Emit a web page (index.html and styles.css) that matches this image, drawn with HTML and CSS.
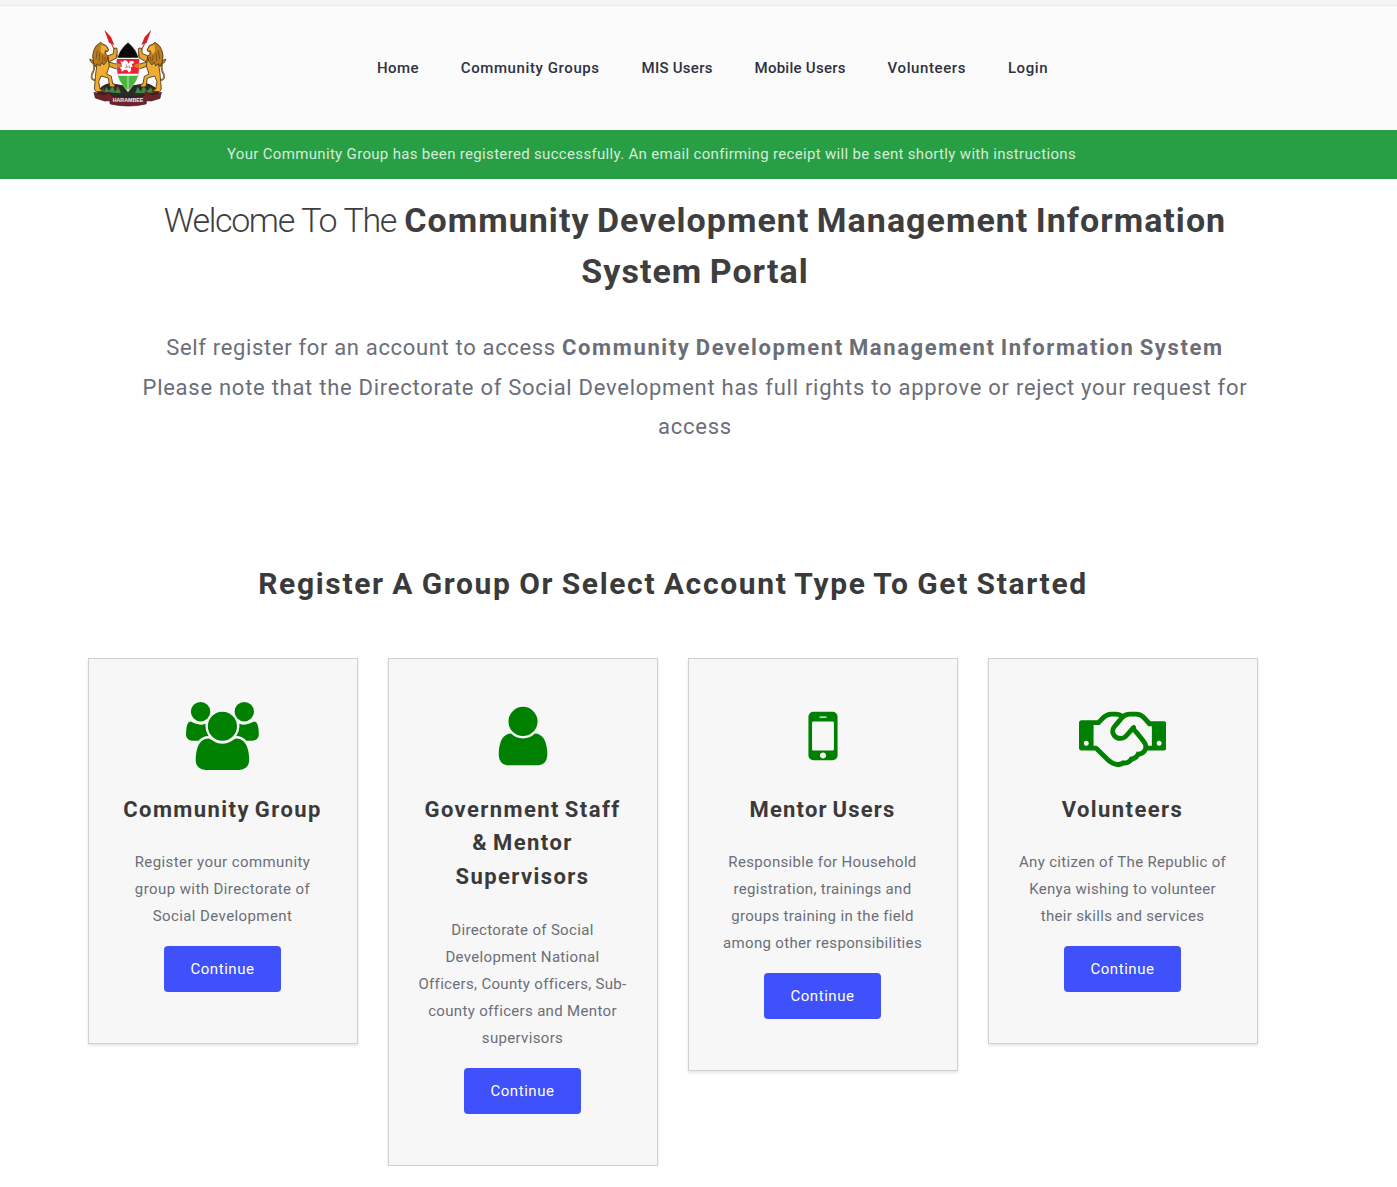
FILE: index.html
```html
<!DOCTYPE html>
<html lang="en">
<head>
<meta charset="utf-8">
<title>Community Development Management Information System</title>
<link rel="stylesheet" href="styles.css">
</head>
<body>
<div class="topline"></div>
<header class="header">
  <svg class="logo" viewBox="0 0 300 285" aria-label="Coat of arms of Kenya">
    <path d="M82 45L122 128M206 45L166 128" stroke="#a8524a" stroke-width="3.500"/>
    <path d="M73 29l20 22 10 24-16-7zM214 29l-20 22-10 24 16-7z" fill="#d8202c"/>
    <path d="M50 220q12-27 40-31l54 10 54-10q28 6 40 31l-30 17H80z" fill="#2b2b25"/>
    <path d="M72 216l7-15 8 11 12-17 6 20 10-15 8 20zM165 220l8-20 10 15 7-18 11 16 12-11 6 16z" fill="#3f8b45"/>
    <path d="M62 214l8-10 6 14zM106 206l8-8 3 12zM191 223l6-15 11 14zM214 216l6-10 8 12z" fill="#a42a35"/>
    <g id="lion">
      <path d="M50 180q-20 2-14-18 10-16 4-32" fill="none" stroke="#473014" stroke-width="5"/>
      <path d="M50 180q-20 2-14-18 10-16 4-32" fill="none" stroke="#dc9a2c" stroke-width="2.500"/>
      <path d="M41 132q-10-3-12-15 12 2 14 12z" fill="#c98a27" stroke="#473014" stroke-width="2"/>
      <path d="M82 108l18-7 2-16 8-1 2 8-3 22-22 12zM80 124l24 7 14 2 1 9-13 4-26-10z" fill="#e9a52c" stroke="#473014" stroke-width="2.500"/>
      <path d="M54 112l30-2 4 28-8 24 14 7 4 22 8 4-3 6-14-1-4-26-22-6-7 17 4 22 10 7-22 1-5-8 2-22 2-24z" fill="#f0ad31" stroke="#473014" stroke-width="2.500"/>
      <path d="M62 67l6 5 11 5 7 13-4 5-6-2 2 10 6 6-3 14-10 12-6-9-5 12-8-7-5 9-7-14-2-18 3-16 7-14z" fill="#bd7c1f" stroke="#473014" stroke-width="2.500"/>
      <path d="M63 75l13 4 7 10-8 2-5 12-8-8z" fill="#efb13a"/>
      <path d="M52 92l-4 26M59 98l-2 26M68 106l1 18M76 110l-2 14" stroke="#5a3a12" stroke-width="2"/>
    </g>
    <use href="#lion" transform="translate(287) scale(-1 1)"/>
    <path d="M144 66q-26 22-34 52-8 52 34 98 42-46 34-98-8-30-34-52z" fill="#fff" stroke="#666" stroke-width="1"/>
    <path d="M144 68q-23 18-31 45h62q-8-27-31-45z" fill="#080808"/>
    <path d="M111 117h66q3 21-2 44h-62q-5-23-2-44z" fill="#ee2036"/>
    <path d="M114 167h60q-8 25-30 45-22-20-30-45z" fill="#48b83e"/>
    <path d="M144 164v51" stroke="#fff" stroke-width="2"/>
    <path d="M120 124l8 2 6-6 8 4 3 7 5-8 9 0 4 6-8 3 3 8-6 2 2 9-7 7-5-7-8-2-9 6-1-7-5-5 7-5-2-8z" fill="#fff"/>
    <path d="M137 132l4 6-5 5 9-3 4 4-1-8" fill="none" stroke="#8c3a44" stroke-width="1.500"/>
    <path d="M110 130l13 3 2 7-13 5zM178 130l-13 3-2 7 13 5z" fill="#c8832b"/>
    <path d="M42 217l28 7 20-7 4 10q50 12 99 0l4-10 20 7 27-7-4 18-26 8-14-1-2 10q-53 12-107 0l-2-10-15 1-28-9z" fill="#6f222a" stroke="#35151a" stroke-width="2"/>
    <text class="motto" x="144" y="247" textLength="92" lengthAdjust="spacingAndGlyphs">HARAMBEE</text>
  </svg>
  <nav class="nav"><a>Home</a><a class="wide">Community Groups</a><a class="tight">MIS Users</a><a class="tight">Mobile Users</a><a class="wide">Volunteers</a><a class="wide">Login</a></nav>
</header>
<div class="notice">Your Community Group has been registered successfully. An email confirming receipt will be sent shortly with instructions</div>
<main>
  <h1 class="welcome"><span class="light">Welcome To The</span> Community Development Management Information<br>System Portal</h1>
  <p class="lead"><span class="intro">Self register for an account to access</span> <b>Community Development Management Information System</b><br>Please note that the Directorate of Social Development has full rights to approve or reject your request for<br>access</p>
  <h2 class="choose">Register A Group Or Select Account Type To Get Started</h2>
  <div class="cards">
    <section class="card">
      <svg class="icon" viewBox="0 0 1920 1792"><path d="M593 896q-162 5-265 128h-134q-82 0-138-40.500t-56-118.500q0-353 124-353 6 0 43.500 21t97.500 42.500 119 21.500q67 0 133-23-5 37-5 66 0 139 81 256zM1664 1533q0 120-73 189.500t-194 69.500h-874q-121 0-194-69.500t-73-189.500q0-53 3.500-103.500t14-109 26.500-108.500 43-97.500 62-81 85.500-53.500 111.500-20q10 0 43 21.500t73 48 107 48 135 21.500 135-21.500 107-48 73-48 43-21.500q61 0 111.500 20t85.500 53.500 62 81 43 97.500 26.500 108.500 14 109 3.500 103.500zM640 256q0 106-75 181t-181 75-181-75-75-181 75-181 181-75 181 75 75 181zM1344 640q0 159-112.500 271.500t-271.500 112.500-271.500-112.500-112.500-271.500 112.500-271.500 271.500-112.500 271.500 112.500 112.500 271.500zM1920 865q0 78-56 118.500t-138 40.500h-134q-103-123-265-128 81-117 81-256 0-29-5-66 66 23 133 23 59 0 119-21.500t97.500-42.500 43.500-21q124 0 124 353zM1792 256q0 106-75 181t-181 75-181-75-75-181 75-181 181-75 181 75 75 181z"/></svg>
      <h3>Community Group</h3>
      <p class="wide">Register your community<br>group with Directorate of<br>Social Development</p>
      <a class="button">Continue</a>
    </section>
    <section class="card">
      <svg class="icon" viewBox="0 0 1792 1792"><path d="M1536 1399q0 109-62.500 187t-150.500 78h-854q-88 0-150.500-78t-62.500-187q0-85 8.500-160.500t31.500-152 58.500-131 94-89 134.500-34.500q131 128 313 128t313-128q76 0 134.500 34.500t94 89 58.500 131 31.500 152 8.500 160.500zm-256-887q0 159-112.500 271.500t-271.500 112.500-271.500-112.500-112.500-271.500 112.500-271.500 271.500-112.500 271.500 112.500 112.500 271.500z"/></svg>
      <h3>Government Staff<br>&amp; Mentor<br>Supervisors</h3>
      <p>Directorate of Social<br>Development National<br>Officers, County officers, Sub-<br>county officers and Mentor<br>supervisors</p>
      <a class="button">Continue</a>
    </section>
    <section class="card">
      <svg class="icon" viewBox="0 0 1792 1792"><path d="M976 1408q0-33-23.500-56.500t-56.500-23.500-56.500 23.500-23.500 56.500 23.500 56.500 56.500 23.500 56.500-23.500 23.500-56.500zm208-160v-704q0-13-9.500-22.500t-22.500-9.500h-512q-13 0-22.500 9.500t-9.500 22.500v704q0 13 9.500 22.500t22.500 9.500h512q13 0 22.500-9.500t9.500-22.500zm-192-848q0-16-16-16h-160q-16 0-16 16t16 16h160q16 0 16-16zm288-16v1024q0 52-38 90t-90 38h-512q-52 0-90-38t-38-90v-1024q0-52 38-90t90-38h512q52 0 90 38t38 90z"/></svg>
      <h3 class="tight">Mentor Users</h3>
      <p>Responsible for Household<br>registration, trainings and<br>groups training in the field<br>among other responsibilities</p>
      <a class="button">Continue</a>
    </section>
    <section class="card">
      <svg class="icon" viewBox="0 0 2304 1792"><path d="M192 1152q40 0 56-32t0-64-56-32-56 32 0 64 56 32zM1665 1094q-10-13-38.500-50t-41.500-54-38-49-42.500-53-40.500-47-45-49l-125 140q-83 94-208.500 92t-205.500-98q-57-69-56.500-158t58.500-157l177-206q-22-11-51-16.500t-47.500-6-56.500.5-49 1q-92 0-158 66l-158 158h-155v544q5 0 21-.5t22 0 19.500 2 20.500 4.500 17.500 8.500 18.500 13.500l297 292q115 111 227 111 78 0 125-47 57 20 112.500-8t72.500-85q74 6 127-44 20-18 36-45.500t14-50.500q10 10 43 10 43 0 77-21t49.500-53 12-71.500-30.500-73.500zM1824 1152h96v-512h-93l-157-180q-66-76-169-76h-167q-89 0-146 67l-209 243q-28 33-28 75t27 75q43 51 110 52t111-49l193-218q25-23 53.500-21.500t47 27 8.500 56.500q16 19 56 63t60 68q29 36 82.500 105.500t64.500 84.500q52 66 60 140zM2112 1152q40 0 56-32t0-64-56-32-56 32 0 64 56 32zM2304 576v640q0 26-19 45t-45 19h-434q-27 65-82 106.500t-125 51.500q-33 48-80.500 81.500t-102.500 45.500q-42 53-104.500 81.500t-128.500 24.500q-60 34-126 39.500t-127.500-14-117-53.500-103.500-81l-287-282h-358q-26 0-45-19t-19-45v-672q0-26 19-45t45-19h421q14-14 47-48t47.500-48 44-40 50.500-37.500 51-25.500 62-19.500 68-5.500h117q99 0 181 56 82-56 181-56h167q35 0 67 6t56.500 14.500 51.500 26.500 44.500 31 43 39.500 39 41 41 45 41.500 47.500h355q26 0 45 19t19 45z"/></svg>
      <h3>Volunteers</h3>
      <p>Any citizen of The Republic of<br>Kenya wishing to volunteer<br>their skills and services</p>
      <a class="button">Continue</a>
    </section>
  </div>
</main>
</body>
</html>
```
FILE: styles.css
```css
* { box-sizing: border-box; }
body { margin: 0; background: #fff; font-family: Roboto, "Open Sans", sans-serif; color: #6b6e78; }
h1, h2, h3, p { margin: 0; }

.topline { height: 6px; background: #f3f4f6; border-bottom: 1px solid #ebebec; }
.header { height: 124px; background: #fbfbfb; display: flex; align-items: flex-start; padding: 14px 0 0 80px; }
.logo { width: 100px; height: 95px; flex: none; }
.motto { font: bold 15px "Liberation Sans", sans-serif; fill: #eee; text-anchor: middle; }
.nav { display: flex; gap: 41.800px; margin: 38px 0 0 197px; font-size: 15px; line-height: 20px; font-weight: 500; letter-spacing: .42px; color: #2f3142; white-space: nowrap; }
.nav .wide { letter-spacing: .6px; }
.nav .tight { letter-spacing: .27px; }

.notice { height: 49px; background: #289e45; color: #d4edda; font-size: 15px; line-height: 48px; letter-spacing: .325px; padding-left: 227px; white-space: nowrap; }

.welcome { width: 1110px; margin: 16px 0 0 140px; font-size: 34px; line-height: 51px; font-weight: 700; letter-spacing: 1.020px; word-spacing: -2.100px; color: #3e3e3f; text-align: center; white-space: nowrap; }
.light { font-weight: 300; letter-spacing: -1.350px; word-spacing: 1px; margin-right: 1px; }
.lead { width: 1110px; margin: 31px 0 0 140px; font-size: 22px; line-height: 39.600px; letter-spacing: .730px; text-align: center; white-space: nowrap; }
.lead .intro { letter-spacing: .660px; }
.lead b { letter-spacing: 1.620px; word-spacing: -1.900px; }
.choose { width: 1170px; margin: 114px 0 0 88px; font-size: 30px; line-height: 45px; font-weight: 700; letter-spacing: 1.650px; word-spacing: -1.500px; color: #3a3a3a; text-align: center; white-space: nowrap; }

.cards { display: grid; grid-template-columns: repeat(4, 270px); gap: 30px; margin: 52px 0 0 88px; align-items: start; }
.card { display: flex; flex-direction: column; align-items: center; text-align: center; white-space: nowrap; background: #f7f7f7; border: 1px solid #d0d0d0; box-shadow: 0 2px 3px rgba(0,0,0,.1); padding: 43px 1px 51px 0; }
.icon { height: 68px; fill: #008000; }
.card h3 { margin-top: 23px; font-size: 22px; line-height: 33.600px; font-weight: 700; letter-spacing: 1.420px; word-spacing: -2px; color: #3a3a3a; }
.card h3.tight { letter-spacing: 1.200px; }
.card p { margin-top: 23px; font-size: 15px; line-height: 27px; letter-spacing: .330px; }
.card p.wide { letter-spacing: .410px; }
.button { margin-top: 16px; width: 117px; height: 46px; border-radius: 4px; background: #3f51fa; color: #fff; font-size: 15px; line-height: 46px; letter-spacing: .550px; }
```
